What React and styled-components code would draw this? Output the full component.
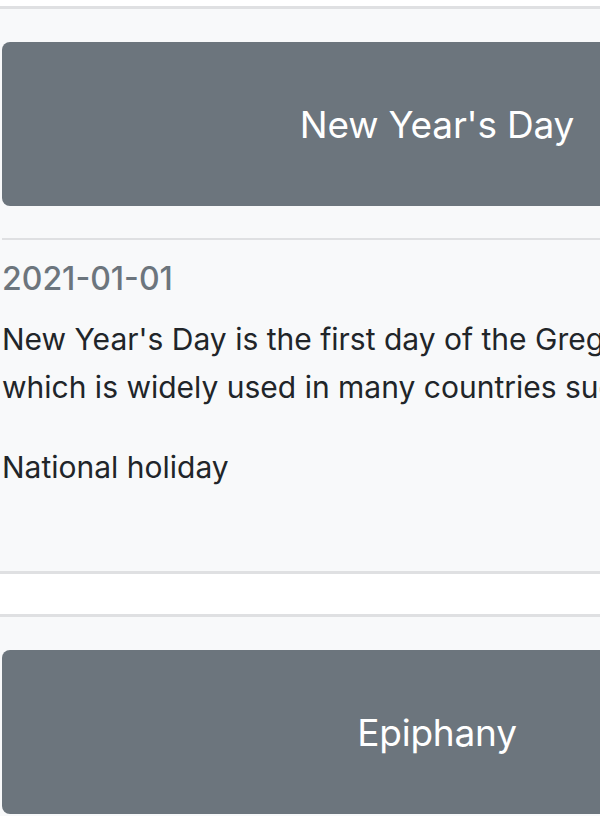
import React from "react";
import styled, { createGlobalStyle } from "styled-components";

const GlobalStyle = createGlobalStyle`
  html, body {
    margin: 0;
    padding: 0;
    background: #ffffff;
    overflow: hidden;
  }
  body {
    font-family: Inter, "Noto Sans", "Liberation Sans", sans-serif;
    color: #212529;
    -webkit-font-smoothing: antialiased;
  }
`;

const List = styled.div`
  padding-top: 6px;
  width: 900px;
`;

const Card = styled.article`
  background: #f8f9fa;
  border-top: 3px solid #dfe0e2;
  border-bottom: 3px solid #dfe0e2;
  padding: 33px 0 48px 2px;
  margin-bottom: 40px;
`;

const TitleBox = styled.div`
  width: 870px;
  height: 164px;
  border-radius: 8px;
  background: #6c757d;
  display: flex;
  align-items: center;
  justify-content: center;
`;

const Title = styled.h5`
  margin: 0;
  font-size: 37px;
  font-weight: 400;
  color: #ffffff;
  letter-spacing: -0.2px;
`;

const Divider = styled.hr`
  margin: 32px 0 0;
  border: 0;
  border-top: 2px solid #dfe0e2;
  width: 870px;
`;

const Body = styled.div`
  width: 870px;
  padding-top: 20px;
`;

const Date = styled.h6`
  margin: 0 0 17px;
  font-size: 32px;
  font-weight: 500;
  line-height: 1.2;
  color: #6c757d;
`;

const Text = styled.p`
  margin: 0 0 32px;
  font-size: 30px;
  line-height: 48px;
`;

const holidays = [
  {
    id: 1,
    name: "New Year's Day",
    date: "2021-01-01",
    description:
      "New Year's Day is the first day of the Gregorian calendar, which is widely used in many countries such as the USA.",
    type: "National holiday",
  },
  {
    id: 2,
    name: "Epiphany",
    date: "2021-01-06",
    description:
      "Epiphany is a Christian holiday celebrating the visit of the Magi to the Christ child.",
    type: "Observance",
  },
];

export default function App() {
  return (
    <>
      <GlobalStyle />
      <List>
        {holidays.map((h) => (
          <Card key={h.id}>
            <TitleBox>
              <Title>{h.name}</Title>
            </TitleBox>
            <Divider />
            <Body>
              <Date>{h.date}</Date>
              <Text>{h.description}</Text>
              <Text>{h.type}</Text>
            </Body>
          </Card>
        ))}
      </List>
    </>
  );
}
